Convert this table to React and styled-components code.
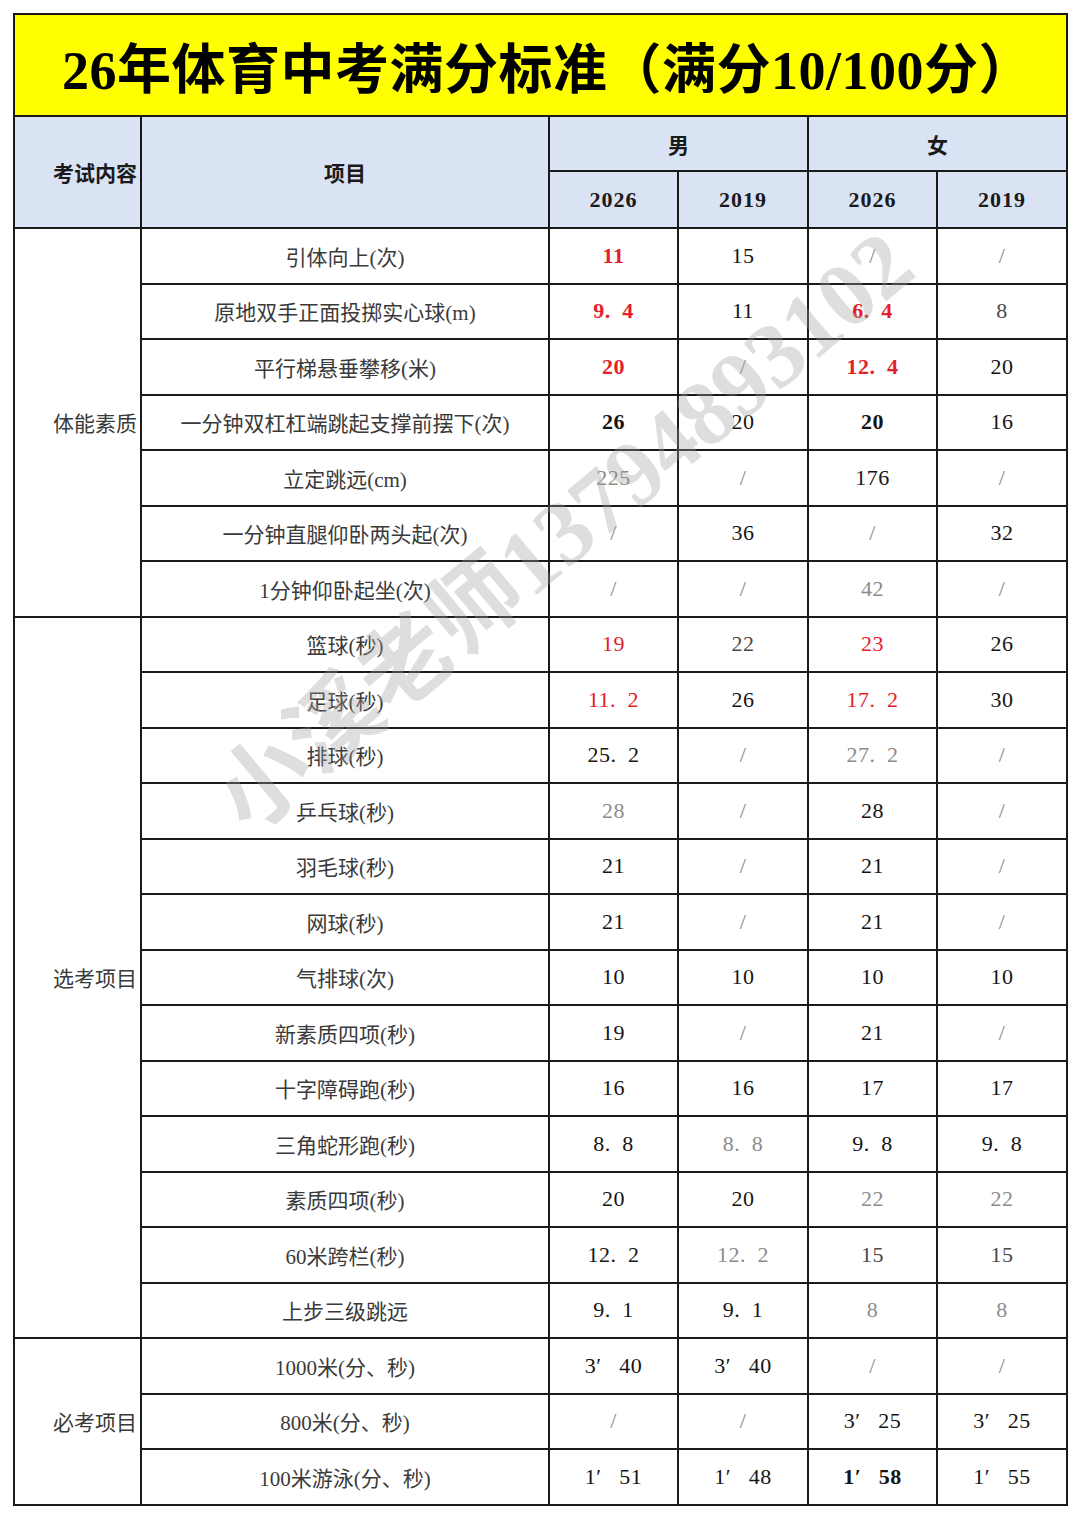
import React from 'react';
import styled, { createGlobalStyle } from 'styled-components';

const GlobalStyle = createGlobalStyle`
  html, body {
    margin: 0;
    padding: 0;
    background: #ffffff;
  }
  body {
    font-family: "Liberation Serif", "Noto Sans CJK SC", serif;
  }
`;

const RED = '#e3212b';

// decimal with the wide gap used in the sheet, e.g. "9. 4"
const d = (a, b) => `${a}.\u2002${b}`;
// minutes / seconds, e.g. "3′ 40"
const t = (m, s) => `${m}′\u2002 ${s}`;

// 男 2026 / 男 2019 / 女 2026 / 女 2019
const groups = [
  {
    name: '体能素质',
    rows: [
      { item: '引体向上(次)', vals: [['11', 'red', 1], ['15'], ['/'], ['/']] },
      { item: '原地双手正面投掷实心球(m)', vals: [[d(9, 4), 'red', 1], ['11'], [d(6, 4), 'red', 1], ['8', 'soft']] },
      { item: '平行梯悬垂攀移(米)', vals: [['20', 'red', 1], ['/'], [d(12, 4), 'red', 1], ['20']] },
      { item: '一分钟双杠杠端跳起支撑前摆下(次)', vals: [['26', null, 1], ['20'], ['20', null, 1], ['16']] },
      { item: '立定跳远(cm)', vals: [['225', 'gray'], ['/'], ['176'], ['/']] },
      { item: '一分钟直腿仰卧两头起(次)', vals: [['/'], ['36'], ['/'], ['32']] },
      { item: '1分钟仰卧起坐(次)', vals: [['/'], ['/'], ['42', 'gray'], ['/']] },
    ],
  },
  {
    name: '选考项目',
    rows: [
      { item: '篮球(秒)', vals: [['19', 'red'], ['22', 'soft'], ['23', 'red'], ['26']] },
      { item: '足球(秒)', vals: [[d(11, 2), 'red'], ['26'], [d(17, 2), 'red'], ['30']] },
      { item: '排球(秒)', vals: [[d(25, 2)], ['/'], [d(27, 2), 'gray'], ['/']] },
      { item: '乒乓球(秒)', vals: [['28', 'gray'], ['/'], ['28'], ['/']] },
      { item: '羽毛球(秒)', vals: [['21'], ['/'], ['21'], ['/']] },
      { item: '网球(秒)', vals: [['21'], ['/'], ['21'], ['/']] },
      { item: '气排球(次)', vals: [['10'], ['10'], ['10'], ['10']] },
      { item: '新素质四项(秒)', vals: [['19'], ['/'], ['21'], ['/']] },
      { item: '十字障碍跑(秒)', vals: [['16'], ['16'], ['17'], ['17']] },
      { item: '三角蛇形跑(秒)', vals: [[d(8, 8)], [d(8, 8), 'gray'], [d(9, 8)], [d(9, 8)]] },
      { item: '素质四项(秒)', vals: [['20'], ['20'], ['22', 'gray'], ['22', 'gray']] },
      { item: '60米跨栏(秒)', vals: [[d(12, 2)], [d(12, 2), 'gray'], ['15', 'soft'], ['15', 'soft']] },
      { item: '上步三级跳远', vals: [[d(9, 1)], [d(9, 1)], ['8', 'gray'], ['8', 'gray']] },
    ],
  },
  {
    name: '必考项目',
    rows: [
      { item: '1000米(分、秒)', vals: [[t(3, 40)], [t(3, 40)], ['/'], ['/']] },
      { item: '800米(分、秒)', vals: [['/'], ['/'], [t(3, 25)], [t(3, 25)]] },
      { item: '100米游泳(分、秒)', vals: [[t(1, 51)], [t(1, 48)], [t(1, 58), null, 1], [t(1, 55)]] },
    ],
  },
];

const toneColor = (tone, isSlash) => {
  if (isSlash) return '#8a8a8a';
  if (tone === 'red') return RED;
  if (tone === 'gray') return '#8c8c8c';
  if (tone === 'soft') return '#4a4a4a';
  return '#151515';
};

export default function App() {
  return (
    <Page>
      <GlobalStyle />
      <Sheet>
        <colgroup>
          <Col $w={127} />
          <Col $w={408} />
          <Col $w={129} />
          <Col $w={130} />
          <Col $w={129} />
          <Col $w={130} />
        </colgroup>
        <thead>
          <TitleRow>
            <TitleCell colSpan={6}>26年体育中考满分标准（满分10/100分）</TitleCell>
          </TitleRow>
          <HeadRow $h={55}>
            <HeadCell rowSpan={2} $align="right">考试内容</HeadCell>
            <HeadCell rowSpan={2}>项目</HeadCell>
            <HeadCell colSpan={2}>男</HeadCell>
            <HeadCell colSpan={2}>女</HeadCell>
          </HeadRow>
          <HeadRow $h={57}>
            <HeadCell $year>2026</HeadCell>
            <HeadCell $year>2019</HeadCell>
            <HeadCell $year>2026</HeadCell>
            <HeadCell $year>2019</HeadCell>
          </HeadRow>
        </thead>
        <tbody>
          {groups.map((g) =>
            g.rows.map((r, i) => (
              <BodyRow key={g.name + i}>
                {i === 0 && <GroupCell rowSpan={g.rows.length}>{g.name}</GroupCell>}
                <ItemCell>{r.item}</ItemCell>
                {r.vals.map(([v, tone, bold], k) => (
                  <ValueCell key={k} $color={toneColor(tone, v === '/')} $bold={!!bold}>
                    {v}
                  </ValueCell>
                ))}
              </BodyRow>
            ))
          )}
        </tbody>
      </Sheet>
      <Watermark>小溪老师13794893102</Watermark>
    </Page>
  );
}

const Page = styled.div`
  position: relative;
  width: 1080px;
  padding: 13px 0 14px 13px;
  box-sizing: border-box;
  overflow: hidden;
`;

const Sheet = styled.table`
  border-collapse: collapse;
  table-layout: fixed;
  width: 1054px;
  border: 2px solid #2a2a2a;
`;

const Col = styled.col`
  width: ${(p) => p.$w}px;
`;

const TitleRow = styled.tr`
  height: 102px;
`;

const TitleCell = styled.th`
  background: #ffff00;
  border: 2px solid #1a1a1a;
  font-family: "Liberation Serif", "Noto Sans CJK SC", serif;
  font-size: 54px;
  font-weight: 700;
  color: #000000;
  text-align: center;
  letter-spacing: 0.5px;
  padding: 0 0 0 14px;
`;

const HeadRow = styled.tr`
  height: ${(p) => p.$h}px;
`;

const HeadCell = styled.th`
  background: #dae3f3;
  border: 2px solid #1a1a1a;
  font-family: "Liberation Serif", "Noto Sans CJK SC", serif;
  font-size: ${(p) => (p.$year ? '22px' : '21px')};
  font-weight: 700;
  color: #1a1a1a;
  text-align: ${(p) => p.$align || 'center'};
  padding: ${(p) => (p.$align === 'right' ? '0 3px 0 0' : '0')};
  letter-spacing: ${(p) => (p.$year ? '1px' : '0')};
`;

const BodyRow = styled.tr`
  height: 55.5px;
`;

const GroupCell = styled.td`
  border: 2px solid #1a1a1a;
  font-family: "Noto Sans CJK SC", sans-serif;
  font-size: 21px;
  font-weight: 400;
  color: #3a3a3a;
  text-align: right;
  padding: 0 3px 0 0;
  vertical-align: middle;
`;

const ItemCell = styled.td`
  border: 2px solid #1a1a1a;
  font-family: "Liberation Serif", "Noto Sans CJK SC", serif;
  font-size: 21px;
  font-weight: 400;
  color: #3a3a3a;
  text-align: center;
  padding: 0;
`;

const ValueCell = styled.td`
  border: 2px solid #1a1a1a;
  font-family: "Liberation Serif", "Noto Sans CJK SC", serif;
  font-size: 22px;
  font-weight: ${(p) => (p.$bold ? 700 : 400)};
  color: ${(p) => p.$color};
  text-align: center;
  padding: 0;
  letter-spacing: 0.5px;
`;

const Watermark = styled.div`
  position: absolute;
  left: 558px;
  top: 524px;
  transform: translate(-50%, -50%) rotate(-40deg);
  white-space: nowrap;
  font-family: "Liberation Serif", "Noto Sans CJK SC", serif;
  font-size: 92px;
  font-weight: 700;
  color: rgba(160, 160, 160, 0.35);
  pointer-events: none;
  user-select: none;
`;
